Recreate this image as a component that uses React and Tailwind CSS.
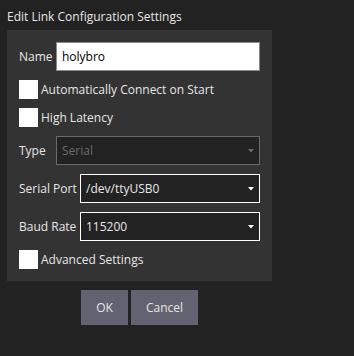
import React from "react";

const Check = ({ label }) => (
  <div className="flex items-center h-[19px]">
    <div className="w-[19px] h-[19px] bg-white" />
    <span className="ml-[3px] text-[#e6e6e6]">{label}</span>
  </div>
);

const Arrow = ({ color }) => (
  <svg width="6" height="4" viewBox="0 0 6 4" className="absolute right-[5px] top-[12px]">
    <path d="M0 0 L6 0 L3 3.5 Z" fill={color} />
  </svg>
);

const Select = ({ value, disabled }) => (
  <div
    className={
      disabled
        ? "relative flex-1 h-[29px] border border-[#6a6a6a] bg-[#222222] flex items-center pl-[5px] text-[#6a6a6a]"
        : "relative flex-1 h-[29px] border border-white bg-[#222222] flex items-center pl-[5px] text-[#e6e6e6]"
    }
  >
    {value}
    <Arrow color={disabled ? "#6a6a6a" : "#ffffff"} />
  </div>
);

export default function App() {
  return (
    <div
      className="w-[354px] h-[356px] bg-[#222222] text-[12px] text-[#e6e6e6] pl-[7px] pt-[8px]"
      style={{ fontFamily: '"Open Sans", sans-serif' }}
    >
      <div className="h-[22px] leading-[18px] text-[12px]">Edit Link Configuration Settings</div>
      <div className="w-[265px] bg-[#333333] p-[12px] flex flex-col gap-[9px]">
        <div className="flex items-center h-[29px]">
          <span className="w-[37px]">Name</span>
          <div className="flex-1 h-[29px] bg-white border border-[#8a8a8a] flex items-center pl-[5px] text-black">
            holybro
          </div>
        </div>
        <Check label="Automatically Connect on Start" />
        <Check label="High Latency" />
        <div className="flex items-center h-[29px]">
          <span className="w-[37px]">Type</span>
          <Select value="Serial" disabled />
        </div>
        <div className="flex items-center h-[29px]">
          <span className="w-[61px]">Serial Port</span>
          <Select value="/dev/ttyUSB0" />
        </div>
        <div className="flex items-center h-[29px]">
          <span className="w-[61px]">Baud Rate</span>
          <Select value="115200" />
        </div>
        <Check label="Advanced Settings" />
      </div>
      <div className="w-[265px] flex justify-center gap-[3px] mt-[9px]">
        <button className="w-[47px] h-[35px] bg-[#626270] text-[#e6e6e6]">OK</button>
        <button className="w-[67px] h-[35px] bg-[#626270] text-[#e6e6e6]">Cancel</button>
      </div>
    </div>
  );
}
